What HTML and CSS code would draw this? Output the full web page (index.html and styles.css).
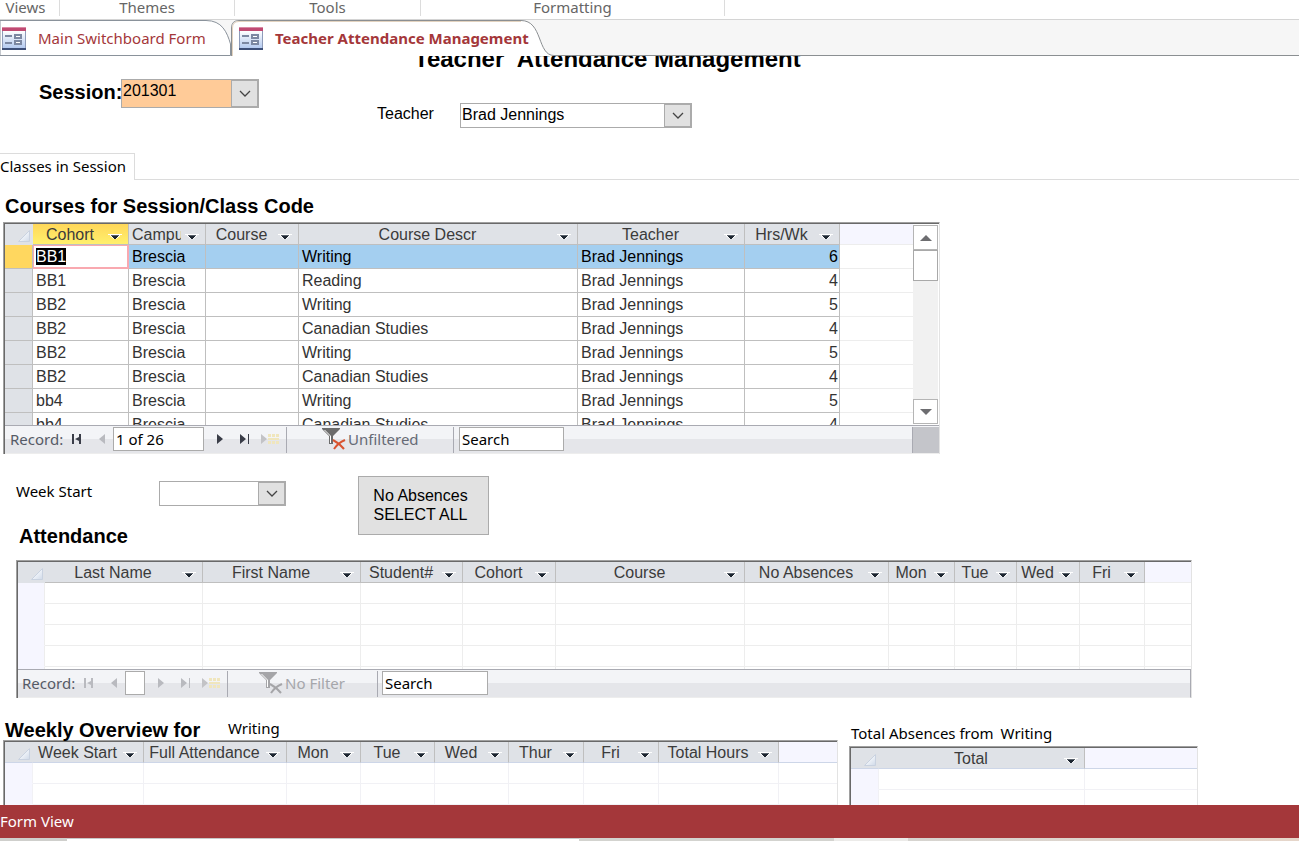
FILE: index.html
```html
<!DOCTYPE html>
<html lang="en">
<head>
<meta charset="utf-8">
<title>Teacher Attendance Management</title>
<link rel="stylesheet" href="styles.css">
</head>
<body>
<svg class="defs" width="0" height="0" aria-hidden="true">
  <defs>
    <linearGradient id="paper" x1="0" y1="0" x2="0" y2="1"><stop offset="0" stop-color="#fff"/><stop offset="1" stop-color="#b4caf0"/></linearGradient>
    <linearGradient id="corner-fill" x1="0" y1="0" x2="1" y2="1"><stop offset="0.4" stop-color="#f4f7fb"/><stop offset="1" stop-color="#cfd9e8"/></linearGradient>
    <symbol id="form-icon" viewBox="0 0 24 23">
      <rect width="24" height="23" fill="#8e9bb8"/>
      <rect x="1" y="4" width="22" height="17" fill="url(#paper)"/>
      <rect width="24" height="4" fill="#c04a72"/><rect width="24" height="1" fill="#d98aa5"/>
      <path d="M0 22h24" stroke="#3d4f78" stroke-width="2"/>
      <path d="M3 9h7M3 16h7" stroke="#7c88a2" stroke-width="2"/>
      <rect x="13" y="8" width="6" height="3" fill="#fff" stroke="#7c88a2" stroke-width="2"/>
      <rect x="13" y="14" width="6" height="3" fill="#fff" stroke="#7c88a2" stroke-width="2"/>
    </symbol>
    <symbol id="chevron" viewBox="0 0 12 8"><path d="M1 1l5 5 5-5" fill="none" stroke="#444" stroke-width="1.300"/></symbol>
    <symbol id="drop" viewBox="0 0 14 6"><path d="M0 0h14v1H0zM2 1h10v1l-4 3H6L2 2z" fill="#fff"/><path d="M3 1h8v1H3z" fill="#59616b"/><path d="M4 2h6v1H4zM5 3h4v1H5zM6 4h2v1H6z" fill="#1c2530"/></symbol>
    <symbol id="corner" viewBox="0 0 12 12"><path d="M11.500.500v11H.500z" fill="url(#corner-fill)" stroke="#c9d2e0"/></symbol>
    <symbol id="first" viewBox="0 0 10 10"><path d="M0 0h2v10H0zM9 0v10H7V7L3 5l4-2V0z" fill="currentColor"/></symbol>
    <symbol id="prev" viewBox="0 0 6 10"><path d="M6 0v10L0 5z" fill="currentColor"/></symbol>
    <symbol id="next" viewBox="0 0 6 10"><path d="M0 0v10l6-5z" fill="currentColor"/></symbol>
    <symbol id="last" viewBox="0 0 10 10"><path d="M0 0v10l6-5zM8 0h1v10H8z" fill="currentColor"/></symbol>
    <symbol id="new" viewBox="0 0 18 10"><path d="M0 0v10l6-5z" fill="#c3c3c6"/><path d="M7 0h3v3H7zM11 0h3v3h-3zM15 0h3v3h-3zM7 4h11v2H7zM7 7h3v3H7zM11 7h3v3h-3zM15 7h3v3h-3z" fill="#f0e6bd"/></symbol>
    <symbol id="funnel" viewBox="0 0 24 24"><path d="M0 1h18v1l-7 7v8H7V9L0 2z" fill="var(--funnel)"/><path d="M2.500 3l6 6v7" fill="none" stroke="#fff"/><path d="M11 13q6 3 11 9M23 13q-7 3-11 9" fill="none" stroke="var(--cross)" stroke-width="2"/></symbol>
  </defs>
</svg>

<header class="ribbon">
  <span class="group views">Views</span>
  <span class="group themes">Themes</span>
  <span class="group tools">Tools</span>
  <span class="group formatting">Formatting</span>
</header>

<nav class="tabs">
  <a class="tab tab-back" href="#">
    <svg class="tab-shape" viewBox="0 0 231 36" preserveAspectRatio="none" aria-hidden="true"><path d="M0 .500H206C222 .500 227 12 230.500 24V35.500H0z" fill="#fff" stroke="#8a929b"/></svg>
    <svg class="form-icon" aria-hidden="true"><use href="#form-icon"/></svg><span>Main Switchboard Form</span>
  </a>
  <a class="tab tab-front" href="#">
    <svg class="tab-shape" viewBox="0 0 323 36" preserveAspectRatio="none" aria-hidden="true"><path d="M.500 36V8Q.500 .500 8 .500H290C312 .500 306 35.500 323 35.500V36z" fill="#fff"/><path d="M.500 36V8Q.500 .500 8 .500H290C312 .500 306 35.500 323 35.500" fill="none" stroke="#8b8f92"/><path d="M1.500 36V8Q1.500 1.500 8 1.500H290" fill="none" stroke="#e3d3bf"/></svg>
    <svg class="form-icon" aria-hidden="true"><use href="#form-icon"/></svg><span>Teacher Attendance Management</span>
  </a>
  <span class="tab-rest"></span>
</nav>

<main class="form">
  <h1 class="title">Teacher&nbsp; Attendance Management</h1>
  <div class="filters">
    <label class="session-label" for="session">Session:</label>
    <div class="combo combo-session"><select id="session"><option>201301</option></select><span class="combo-arrow"><svg><use href="#chevron"/></svg></span></div>
    <label class="teacher-label" for="teacher">Teacher</label>
    <div class="combo combo-teacher"><select id="teacher"><option>Brad Jennings</option></select><span class="combo-arrow"><svg><use href="#chevron"/></svg></span></div>
  </div>
  <div class="page-tabs"><a class="page-tab" href="#">Classes in Session</a></div>

  <section class="courses">
    <h2>Courses for Session/Class Code</h2>
    <div class="sheet">
      <div class="sheet-view">
        <div class="sheet-scroll courses-scroll">
          <table class="filled">
            <colgroup><col class="w28"><col class="w96"><col class="w77"><col class="w93"><col class="w279"><col class="w167"><col class="w95"><col></colgroup>
            <thead><tr>
              <th class="sel"><svg class="corner"><use href="#corner"/></svg></th>
              <th class="active"><div class="head"><span>Cohort</span><button aria-label="Cohort menu"><svg><use href="#drop"/></svg></button></div></th>
              <th><div class="head"><span>Campus</span><button aria-label="Campus menu"><svg><use href="#drop"/></svg></button></div></th>
              <th><div class="head"><span>Course</span><button aria-label="Course menu"><svg><use href="#drop"/></svg></button></div></th>
              <th><div class="head"><span>Course Descr</span><button aria-label="Course Descr menu"><svg><use href="#drop"/></svg></button></div></th>
              <th><div class="head"><span>Teacher</span><button aria-label="Teacher menu"><svg><use href="#drop"/></svg></button></div></th>
              <th><div class="head"><span>Hrs/Wk</span><button aria-label="Hrs/Wk menu"><svg><use href="#drop"/></svg></button></div></th>
              <th class="rest"></th>
            </tr></thead>
            <tbody>
              <tr class="current"><td class="sel"></td><td class="editing"><mark>BB1</mark></td><td>Brescia</td><td></td><td>Writing</td><td>Brad Jennings</td><td class="num">6</td><td class="rest"></td></tr>
              <tr><td class="sel"></td><td>BB1</td><td>Brescia</td><td></td><td>Reading</td><td>Brad Jennings</td><td class="num">4</td><td class="rest"></td></tr>
              <tr><td class="sel"></td><td>BB2</td><td>Brescia</td><td></td><td>Writing</td><td>Brad Jennings</td><td class="num">5</td><td class="rest"></td></tr>
              <tr><td class="sel"></td><td>BB2</td><td>Brescia</td><td></td><td>Canadian Studies</td><td>Brad Jennings</td><td class="num">4</td><td class="rest"></td></tr>
              <tr><td class="sel"></td><td>BB2</td><td>Brescia</td><td></td><td>Writing</td><td>Brad Jennings</td><td class="num">5</td><td class="rest"></td></tr>
              <tr><td class="sel"></td><td>BB2</td><td>Brescia</td><td></td><td>Canadian Studies</td><td>Brad Jennings</td><td class="num">4</td><td class="rest"></td></tr>
              <tr><td class="sel"></td><td>bb4</td><td>Brescia</td><td></td><td>Writing</td><td>Brad Jennings</td><td class="num">5</td><td class="rest"></td></tr>
              <tr><td class="sel"></td><td>bb4</td><td>Brescia</td><td></td><td>Canadian Studies</td><td>Brad Jennings</td><td class="num">4</td><td class="rest"></td></tr>
            </tbody>
          </table>
        </div>
        <div class="scrollbar">
          <button class="scroll-btn" aria-label="Scroll up"><svg viewBox="0 0 12 6"><path d="M6 0l6 6H0z" fill="#6d6d70"/></svg></button>
          <span class="thumb"></span><span class="track"></span>
          <button class="scroll-btn" aria-label="Scroll down"><svg viewBox="0 0 12 6"><path d="M6 6l6-6H0z" fill="#6d6d70"/></svg></button>
        </div>
      </div>
      <div class="recnav">
        <label for="rec1">Record:</label>
        <button class="i-first" aria-label="First record"><svg><use href="#first"/></svg></button>
        <button class="i-prev off" aria-label="Previous record"><svg><use href="#prev"/></svg></button>
        <input id="rec1" class="rec-input" value="1 of 26">
        <button class="i-next" aria-label="Next record"><svg><use href="#next"/></svg></button>
        <button class="i-last" aria-label="Last record"><svg><use href="#last"/></svg></button>
        <button class="i-new" aria-label="New record"><svg><use href="#new"/></svg></button>
        <button class="filter"><svg><use href="#funnel"/></svg>Unfiltered</button>
        <input class="search" aria-label="Search" value="Search">
        <span class="grip"></span>
      </div>
    </div>
  </section>

  <section class="week-tools">
    <div class="week-left">
      <div class="week-row">
        <label for="week">Week Start</label>
        <div class="combo combo-week"><select id="week"><option></option></select><span class="combo-arrow"><svg><use href="#chevron"/></svg></span></div>
      </div>
      <h2 class="attendance-title">Attendance</h2>
    </div>
    <button class="select-all">No Absences<br>SELECT ALL</button>
  </section>

  <div class="sheet sheet-attendance">
    <div class="sheet-scroll attendance-scroll">
      <table class="empty">
        <colgroup><col class="w27"><col class="w158"><col class="w158"><col class="w102"><col class="w93"><col class="w189"><col class="w144"><col class="w66"><col class="w62"><col class="w63"><col class="w65"><col></colgroup>
        <thead><tr>
          <th class="sel"><svg class="corner"><use href="#corner"/></svg></th>
          <th><div class="head"><span>Last Name</span><button aria-label="Last Name menu"><svg><use href="#drop"/></svg></button></div></th>
          <th><div class="head"><span>First Name</span><button aria-label="First Name menu"><svg><use href="#drop"/></svg></button></div></th>
          <th><div class="head"><span>Student#</span><button aria-label="Student# menu"><svg><use href="#drop"/></svg></button></div></th>
          <th><div class="head"><span>Cohort</span><button aria-label="Cohort menu"><svg><use href="#drop"/></svg></button></div></th>
          <th><div class="head"><span>Course</span><button aria-label="Course menu"><svg><use href="#drop"/></svg></button></div></th>
          <th><div class="head"><span>No Absences</span><button aria-label="No Absences menu"><svg><use href="#drop"/></svg></button></div></th>
          <th><div class="head"><span>Mon</span><button aria-label="Mon menu"><svg><use href="#drop"/></svg></button></div></th>
          <th><div class="head"><span>Tue</span><button aria-label="Tue menu"><svg><use href="#drop"/></svg></button></div></th>
          <th><div class="head"><span>Wed</span><button aria-label="Wed menu"><svg><use href="#drop"/></svg></button></div></th>
          <th><div class="head"><span>Fri</span><button aria-label="Fri menu"><svg><use href="#drop"/></svg></button></div></th>
          <th class="rest"></th>
        </tr></thead>
        <tbody>
          <tr><td class="sel"></td><td></td><td></td><td></td><td></td><td></td><td></td><td></td><td></td><td></td><td></td><td class="rest"></td></tr>
          <tr><td class="sel"></td><td></td><td></td><td></td><td></td><td></td><td></td><td></td><td></td><td></td><td></td><td class="rest"></td></tr>
          <tr><td class="sel"></td><td></td><td></td><td></td><td></td><td></td><td></td><td></td><td></td><td></td><td></td><td class="rest"></td></tr>
          <tr><td class="sel"></td><td></td><td></td><td></td><td></td><td></td><td></td><td></td><td></td><td></td><td></td><td class="rest"></td></tr>
          <tr><td class="sel"></td><td></td><td></td><td></td><td></td><td></td><td></td><td></td><td></td><td></td><td></td><td class="rest"></td></tr>
        </tbody>
      </table>
    </div>
    <div class="recnav recnav-off">
      <label for="rec2">Record:</label>
      <button class="i-first off" aria-label="First record"><svg><use href="#first"/></svg></button>
      <button class="i-prev off" aria-label="Previous record"><svg><use href="#prev"/></svg></button>
      <input id="rec2" class="rec-input rec-short" value="">
      <button class="i-next off" aria-label="Next record"><svg><use href="#next"/></svg></button>
      <button class="i-last off" aria-label="Last record"><svg><use href="#last"/></svg></button>
      <button class="i-new" aria-label="New record"><svg><use href="#new"/></svg></button>
      <button class="filter"><svg><use href="#funnel"/></svg>No Filter</button>
      <input class="search" aria-label="Search" value="Search">
    </div>
  </div>

  <div class="overview">
    <section class="weekly">
      <div class="weekly-head"><h2>Weekly Overview for</h2><span>Writing</span></div>
      <div class="sheet">
        <table class="empty soft">
          <colgroup><col class="w28"><col class="w111"><col class="w143"><col class="w74"><col class="w74"><col class="w74"><col class="w75"><col class="w75"><col class="w120"><col></colgroup>
          <thead><tr>
            <th class="sel"><svg class="corner"><use href="#corner"/></svg></th>
            <th><div class="head"><span>Week Start</span><button aria-label="Week Start menu"><svg><use href="#drop"/></svg></button></div></th>
            <th><div class="head"><span>Full Attendance</span><button aria-label="Full Attendance menu"><svg><use href="#drop"/></svg></button></div></th>
            <th><div class="head"><span>Mon</span><button aria-label="Mon menu"><svg><use href="#drop"/></svg></button></div></th>
            <th><div class="head"><span>Tue</span><button aria-label="Tue menu"><svg><use href="#drop"/></svg></button></div></th>
            <th><div class="head"><span>Wed</span><button aria-label="Wed menu"><svg><use href="#drop"/></svg></button></div></th>
            <th><div class="head"><span>Thur</span><button aria-label="Thur menu"><svg><use href="#drop"/></svg></button></div></th>
            <th><div class="head"><span>Fri</span><button aria-label="Fri menu"><svg><use href="#drop"/></svg></button></div></th>
            <th><div class="head"><span>Total Hours</span><button aria-label="Total Hours menu"><svg><use href="#drop"/></svg></button></div></th>
            <th class="rest"></th>
          </tr></thead>
          <tbody>
            <tr><td class="sel"></td><td></td><td></td><td></td><td></td><td></td><td></td><td></td><td></td><td class="rest"></td></tr>
            <tr><td class="sel"></td><td></td><td></td><td></td><td></td><td></td><td></td><td></td><td></td><td class="rest"></td></tr>
            <tr><td class="sel"></td><td></td><td></td><td></td><td></td><td></td><td></td><td></td><td></td><td class="rest"></td></tr>
          </tbody>
        </table>
      </div>
    </section>
    <section class="totals">
      <div class="totals-head"><span>Total Absences from</span><span>Writing</span></div>
      <div class="sheet">
        <table class="empty soft">
          <colgroup><col class="w28"><col class="w206"><col></colgroup>
          <thead><tr>
            <th class="sel"><svg class="corner"><use href="#corner"/></svg></th>
            <th><div class="head"><span>Total</span><button aria-label="Total menu"><svg><use href="#drop"/></svg></button></div></th>
            <th class="rest"></th>
          </tr></thead>
          <tbody>
            <tr><td class="sel"></td><td></td><td class="rest"></td></tr>
            <tr><td class="sel"></td><td></td><td class="rest"></td></tr>
            <tr><td class="sel"></td><td></td><td class="rest"></td></tr>
          </tbody>
        </table>
      </div>
    </section>
  </div>
</main>

<footer class="status">Form View</footer>
<div class="taskbar"><span class="start"></span><span class="window"></span><span class="mid"></span><span class="light"></span><span class="desk"></span></div>
</body>
</html>
```
FILE: styles.css
```css
* { box-sizing: border-box; }
body {
  margin: 0;
  height: 100vh;
  display: flex;
  flex-direction: column;
  overflow: hidden;
  background: #fff;
  color: #000;
  font-family: "Liberation Sans", Arial, sans-serif;
  font-size: 16px;
}
h1, h2 { margin: 0; font-weight: bold; }
h2 { font-size: 20px; line-height: 24px; white-space: nowrap; }
a { color: inherit; text-decoration: none; }
button, input, select { font: inherit; color: inherit; margin: 0; padding: 0; border: 0; border-radius: 0; background: none; appearance: none; }
svg { display: block; flex: none; }
.defs { position: absolute; }

/* ribbon group captions */
.ribbon {
  flex: none;
  display: flex;
  height: 20px;
  border-bottom: 1px solid #d4d4d4;
  color: #666;
  font: 15px/14px "Noto Sans", sans-serif;
}
.group { height: 16px; text-align: center; border-right: 1px solid #dcdcdc; }
.views { width: 60px; padding-right: 8px; }
.themes { width: 175px; }
.tools { width: 186px; }
.formatting { width: 304px; }

/* document tabs */
.tabs { flex: none; display: flex; height: 36px; background: #f6f6f6; color: #a4373a; font: 15px/36px "Noto Sans", sans-serif; }
.tab { position: relative; display: flex; align-items: center; white-space: nowrap; z-index: 0; }
.tab-shape { position: absolute; inset: 0; width: 100%; height: 100%; z-index: -1; }
.tab-back { width: 231px; padding-left: 2px; gap: 12px; }
.tab-front { width: 323px; padding-left: 8px; gap: 12px; font-weight: bold; }
.form-icon { width: 24px; height: 23px; }
.tab-rest { flex: 1; border-bottom: 1px solid #8b8f92; }

/* form body */
.form { flex: 1; min-height: 0; overflow: hidden; }
.title { height: 16px; display: flex; align-items: flex-end; padding-left: 414px; font-size: 24px; line-height: 26px; white-space: nowrap; }
.filters { display: flex; align-items: flex-start; height: 97px; padding: 7px 0 0 39px; }
.session-label { width: 82px; padding-top: 1px; font-weight: bold; font-size: 20px; line-height: 24px; }
.teacher-label { margin-left: 118px; width: 83px; padding-top: 24px; line-height: 22px; }
.combo { display: flex; border: 1px solid #ababab; background: #fff; }
.combo select { flex: 1; min-width: 0; padding-left: 1px; }
.combo-arrow { width: 27px; display: flex; align-items: center; justify-content: center; border: 1px solid #ababab; background: #e1e1e1; pointer-events: none; }
.combo-arrow svg { width: 12px; height: 8px; }
.combo-session { width: 138px; height: 29px; background: #ffcb98; }
.combo-session select { padding-bottom: 6px; }
.combo-teacher { width: 232px; height: 25px; margin-top: 24px; }
.combo-teacher select { padding-bottom: 2px; }
.page-tabs { display: flex; height: 27px; align-items: stretch; }
.filters { height: 81px; }
.page-tabs::after { content: ""; flex: 1; border-bottom: 1px solid #dcdcdc; }
.page-tab { width: 135px; border: 1px solid #dcdcdc; border-width: 1px 1px 0 0; font: 15px/25px "Noto Sans", sans-serif; white-space: nowrap; }

/* datasheets */
.courses { padding: 14px 0 0 3px; max-width: 940px; }
.courses h2 { padding-left: 2px; height: 28px; }
.sheet { border: 1px solid #a0a0a0; border-right-color: #e3e3e3; border-bottom: 0; background: #fff; box-shadow: inset 1px 1px #696969; padding: 1px 0 0 1px; }
.sheet-view { display: flex; }
.sheet-scroll { flex: 1; min-width: 0; overflow: hidden; }
.courses-scroll { height: 201px; }
.attendance-scroll { height: 107px; }
table { width: 100%; table-layout: fixed; border-collapse: separate; border-spacing: 0; color: #333; }
.w27 { width: 27px; } .w28 { width: 28px; } .w62 { width: 62px; } .w63 { width: 63px; } .w65 { width: 65px; } .w66 { width: 66px; }
.w74 { width: 74px; } .w75 { width: 75px; } .w77 { width: 77px; } .w93 { width: 93px; } .w95 { width: 95px; } .w96 { width: 96px; }
.w102 { width: 102px; } .w111 { width: 111px; } .w120 { width: 120px; } .w143 { width: 143px; } .w144 { width: 144px; } .w158 { width: 158px; }
.w167 { width: 167px; } .w189 { width: 189px; } .w206 { width: 206px; } .w279 { width: 279px; }
th, td { padding: 0; border-right: 1px solid #bfbfbf; border-bottom: 1px solid #bfbfbf; font-weight: normal; white-space: nowrap; }
th { height: 21px; background: #dfe2e7; color: #3b3b3b; }
th.sel { border-right-color: #dfe2e7; border-bottom-color: #dfe2e7; }
th.active { background: linear-gradient(#ffd75a, #fff06c); }
th.rest { background: #f6f6ff; border-right: 0; border-bottom-color: #ededed; }
.head { display: flex; height: 20px; padding-left: 3px; }
.head span { flex: 1; min-width: 0; overflow: hidden; text-align: center; line-height: 22px; }
.head button { flex: none; width: 24px; height: 20px; padding: 6px 0 0 4px; }
.head svg { width: 14px; height: 6px; }
.corner { width: 12px; height: 12px; margin: 4px 0 0 13px; }
.filled td { height: 24px; padding: 0 0 0 3px; line-height: 22px; }
.filled td.sel { background: #dfe2e7; }
.filled td.num { text-align: right; padding-right: 1px; }
td.rest, .filled td.rest { border-right: 0; border-bottom-color: #ededed; }
.current td { background: #a4cff0; color: #000; }
.filled .current td.sel { background: #ffd75f; }
.filled .current td.rest { background: #fff; }
.filled td.editing { background: #fff; box-shadow: inset 0 0 0 1px #f9a9b0; border-color: #f9a9b0; }
mark { background: #000; color: #fff; }
.empty td { height: 21px; border-color: #ededed; }
.empty td.sel { background: #f6f6ff; border-bottom-color: #f6f6ff; }
.soft th { border-bottom-color: #cdd6e8; }
.soft td { border-color: #f1f1f5; }

.scrollbar { width: 26px; display: flex; flex-direction: column; padding: 1px 1px 1px 0; }
.scroll-btn { height: 25px; display: flex; align-items: center; justify-content: center; border: 1px solid #b5b5b5; background: #fff; }
.scroll-btn svg { width: 12px; height: 6px; }
.thumb { height: 31px; border: 1px solid #a9a9a9; background: #fff; }
.track { flex: 1; background: #f1f1f1; }

/* record navigator */
.recnav {
  --funnel: #6c6c6c; --cross: #d9532f;
  display: flex; align-items: flex-start; height: 29px; padding: 1px 0 0 5px;
  border-top: 1px solid #a9aab2; border-bottom: 1px solid #ededed;
  background: linear-gradient(#f3f4f7 50%, #e5e6ea 50%);
  color: #555a66; font: 15px/24px "Noto Sans", sans-serif;
}
.recnav-off { --funnel: #a5a5a8; --cross: #a5a5a8; border-right: 1px solid #a9aab2; padding-left: 4px; }
.recnav label { width: 62px; }
.recnav button { flex: none; height: 24px; color: #3a3d48; text-align: left; }
.recnav button.off { color: #b9babf; }
.recnav svg { width: 18px; height: 10px; }
.i-first svg, .i-last svg { width: 10px; }
.i-prev svg, .i-next svg { width: 6px; }
.i-first { width: 27px; }
.i-prev { width: 14px; }
.i-next { width: 23px; }
.i-last { width: 21px; }
.i-new { width: 25px; }
.rec-input, .search { height: 24px; border: 1px solid #ababab; background: #fff; color: #000; padding: 0 0 0 2px; line-height: 22px; }
.rec-input { width: 91px; margin-right: 13px; }
.rec-short { width: 20px; }
.recnav .filter { display: flex; align-items: flex-start; width: 168px; height: 26px; padding-left: 35px; gap: 2px; border: 1px solid #a9aab2; border-width: 0 1px; color: #666a75; }
.recnav .filter svg { width: 24px; height: 24px; }
.recnav-off .filter { width: 151px; padding-left: 31px; gap: 2px; color: #a5a6ab; }
.search { width: 105px; margin-left: 5px; }
.recnav-off .search { width: 106px; margin-left: 4px; }
.grip { width: 27px; height: 26px; margin-left: auto; background: #c4c5ca; border-left: 1px solid #a9aab2; }

/* week picker and bulk action */
.week-tools { display: flex; padding-top: 22px; height: 106px; }
.week-left { width: 358px; padding-top: 5px; }
.week-row { display: flex; padding-left: 16px; font: 15px/20px "Noto Sans", sans-serif; }
.week-row label { width: 143px; }
.combo-week { width: 127px; height: 25px; }
.week-left h2 { margin-top: 18px; padding-left: 19px; }
.select-all { width: 131px; height: 59px; padding: 0 6px 2px 0; border: 1px solid #ababab; background: #e1e1e1; line-height: 19px; }
.sheet-attendance { margin-left: 16px; max-width: 1176px; }

/* bottom overview */
.overview { display: flex; gap: 11px; padding-left: 3px; }
.weekly { flex: 0 1 835px; padding-top: 20px; }
.weekly-head { display: flex; height: 22px; padding-left: 2px; font: 15px/20px "Noto Sans", sans-serif; }
.weekly-head h2 { width: 223px; font-family: "Liberation Sans", Arial, sans-serif; }
.totals { flex: 0 1 349px; padding-top: 23px; }
.totals-head { display: flex; gap: 7px; height: 25px; padding-left: 2px; font: 15px/24px "Noto Sans", sans-serif; white-space: nowrap; }

.status { flex: none; height: 33px; background: #a4373a; color: #fff; font: 15px/33px "Noto Sans", sans-serif; }
.taskbar { flex: none; display: flex; height: 3px; background: #d6d3cf; }
.start { width: 67px; background: #cfcfcc; }
.window { width: 512px; border-top: 1px solid #c8c8c8; background: #fff; }
.mid { width: 255px; background: #d3d3cf; }
.light { width: 74px; background: #ecebe9; }
.desk { flex: 1; background: linear-gradient(90deg, #d6d4d0, #e6d6ca); }
```
